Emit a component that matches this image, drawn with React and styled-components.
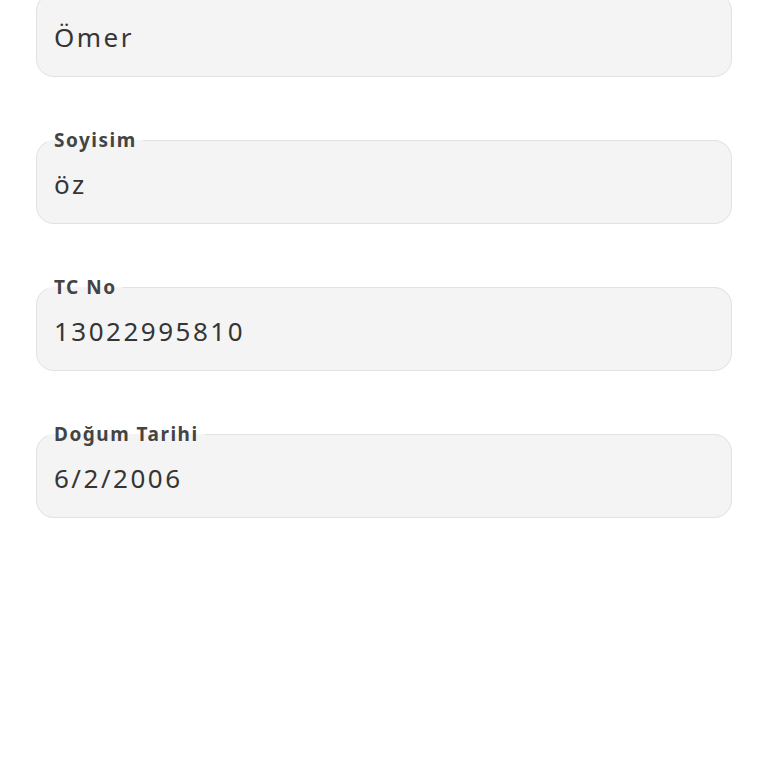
import React from "react";
import styled, { createGlobalStyle } from "styled-components";

const GlobalStyle = createGlobalStyle`
  html, body {
    margin: 0;
    padding: 0;
    background: #ffffff;
  }
  body {
    font-family: "Noto Sans", "Open Sans", sans-serif;
    overflow: hidden;
  }
`;

const Page = styled.div`
  width: 768px;
  height: 768px;
  overflow: hidden;
  background: #fff;
`;

const Form = styled.div`
  display: flex;
  flex-direction: column;
  gap: 54px;
  padding: 0 36px;
  margin-top: -16px;
`;

const Box = styled.fieldset`
  margin: 0;
  min-width: 0;
  height: 93px;
  box-sizing: border-box;
  padding: 0 17px;
  border: 1.5px solid #e2e2e2;
  border-radius: 18px;
  background: #f4f4f4;
`;

const Label = styled.legend`
  margin-left: -7px;
  padding: 0 6px 0 7px;
  font-size: 19px;
  line-height: 18px;
  font-weight: 700;
  letter-spacing: 1.5px;
  color: #444444;
`;

const Value = styled.div`
  margin-top: 17px;
  font-size: 26px;
  line-height: 36px;
  letter-spacing: 2.5px;
  color: #353535;
`;

const fields = [
  { label: "İsim", value: "Ömer" },
  { label: "Soyisim", value: "öz" },
  { label: "TC No", value: "13022995810" },
  { label: "Doğum Tarihi", value: "6/2/2006" },
];

function App() {
  return (
    <Page>
      <GlobalStyle />
      <Form>
        {fields.map((f) => (
          <Box key={f.label}>
            <Label>{f.label}</Label>
            <Value>{f.value}</Value>
          </Box>
        ))}
      </Form>
    </Page>
  );
}

export default App;
